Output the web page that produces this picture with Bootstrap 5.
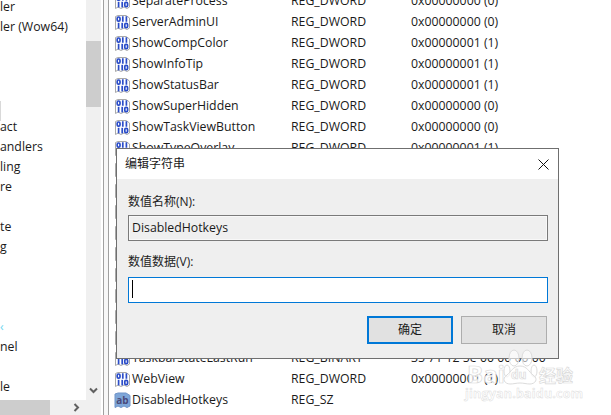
<!DOCTYPE html>
<html lang="zh-CN">
<head>
<meta charset="utf-8">
<title>编辑字符串</title>
<link href="https://cdn.jsdelivr.net/npm/bootstrap@5.3.0/dist/css/bootstrap.min.css" rel="stylesheet">
<style>
html,body{height:415px;overflow:hidden}
body{font-family:"Open Sans","Noto Sans CJK SC",sans-serif;font-size:12.3px;color:#1a1a1a;background:#fff;position:relative;line-height:1}
.tree-pane{width:101px;height:415px;flex:none;background:#f0f0f0;position:relative}
.tree-view{width:86px;height:400px;background:#fff;overflow:hidden}
.tree-rows{margin-top:1px}
.tree-row{height:20px;white-space:nowrap}
.tree-row.sel{border-left:1px solid #d9d9d9;background:#fff}
.tree-mark{color:#6fd6ef}
.vbar{width:15px;height:400px;position:relative}
.vthumb{position:absolute;left:0;top:41px;width:15px;height:66px;background:#cdcdcd}
.vdown{position:absolute;left:3px;top:387px}
.hbar{height:15px;width:101px;background:#f0f0f0;position:relative}
.hthumb{width:50px;height:15px;background:#cdcdcd}
.hright{position:absolute;left:73px;top:3px}
.split{width:6px;flex:none;height:415px;border-left:1px solid #a0a0a0;border-right:1px solid #a0a0a0;background:#f7f7f7;margin-left:2px}
.list-pane{flex:1;height:415px;overflow:hidden;padding-left:5px}
.reg-rows{margin-top:-9px}
.reg-row{height:21px;white-space:nowrap}
.reg-ico{width:17px;height:17px;flex:none;margin-right:1px}
.reg-name{width:159px;flex:none}
.reg-type{width:120px;flex:none}
.dlg{position:absolute;left:116px;top:148px;width:443px;height:211px;border:1px solid #6f6f6f;background:#efefef}
.dlg-head{height:30px;background:#fff;padding-left:8px;font-size:12px}
.dlg-x{margin-right:9px}
.dlg-body{padding:16px 10px 0 11px}
.dlg-lab{height:13px;margin-bottom:7px;font-size:12px;line-height:13px;color:#222}
.dlg-val.form-control{height:26px;border:1px solid #7a7a7a;border-radius:0;background:#efefef;padding:0 3px 2px;font-size:12.3px;color:#1a1a1a;box-shadow:inset 0 0 0 1px #f8f8f8;margin-bottom:14px;font-family:inherit}
.dlg-edit{height:26px;border:1px solid #0078d7;background:#fff;padding:2px 3px;margin-top:9px}
.dlg-caret{width:1px;height:18px;background:#000}
.dlg-foot{margin-top:13px;gap:8px;padding-right:1px}
.dlg-btn.btn{width:86px;height:28px;border-radius:0;background:#e1e1e1;border:1px solid #adadad;font-size:12px;color:#1a1a1a;padding:0;line-height:1;font-family:inherit}
.dlg-btn.dlg-def.btn{border:2px solid #0078d7}
.wm{position:absolute;left:0;top:0;width:611px;height:415px;pointer-events:none}
.wm text{font-family:"Open Sans","Noto Sans CJK SC",sans-serif;font-weight:700;fill:#fff;fill-opacity:.85;stroke:#dadada;stroke-width:.7}
.wm .wm-url{stroke-width:.45}
</style>
</head>
<body>
<svg width="0" height="0" class="position-absolute">
<defs>
<symbol id="i-bin" viewBox="0 0 17 17">
<path d="M1.5 2.500 L4 1.500 H12 L15.500 4 V14 L13 15.500 L10 14 L7 15.500 L4 14 L1.500 15.500Z" fill="#fff" stroke="#a9a9a9"/>
<g fill="none" stroke="#2a4cc8" stroke-width="1.7">
<rect x="3.200" y="3" width="2.800" height="4.200" rx="1.200"/>
<path d="M8.800 2.200V7.800M12.400 2.200V7.800"/>
<path d="M4.600 8.800V14.400"/>
<path d="M8.200 8.800V14.400"/>
<rect x="10.800" y="9.400" width="2.800" height="4.200" rx="1.200"/>
</g>
</symbol>
</defs>
</svg>
<div class="d-flex">
<div class="tree-pane">
<div class="d-flex">
<div class="tree-view"><div class="tree-rows">
<div class="tree-row">ler</div>
<div class="tree-row">ler (Wow64)</div>
<div class="tree-row"></div><div class="tree-row"></div><div class="tree-row"></div>
<div class="tree-row sel"></div>
<div class="tree-row">act</div>
<div class="tree-row">andlers</div>
<div class="tree-row">ling</div>
<div class="tree-row">re</div>
<div class="tree-row"></div>
<div class="tree-row">te</div>
<div class="tree-row">g</div>
<div class="tree-row"></div><div class="tree-row"></div><div class="tree-row"></div>
<div class="tree-row tree-mark">‹</div>
<div class="tree-row">nel</div>
<div class="tree-row"></div>
<div class="tree-row">le</div>
</div></div>
<div class="vbar"><div class="vthumb"></div>
<svg class="vdown" width="9" height="7" viewBox="0 0 9 7"><path d="M1 1.500 4.500 5 8 1.500" fill="none" stroke="#606060" stroke-width="2"/></svg></div>
</div>
<div class="hbar"><div class="hthumb"></div>
<svg class="hright" width="7" height="9" viewBox="0 0 7 9"><path d="M1.500 1 5 4.500 1.500 8" fill="none" stroke="#606060" stroke-width="2"/></svg></div>
</div>
<div class="split"></div>
<div class="list-pane"><div class="reg-rows" id="rows"></div></div>
</div>

<div class="dlg" role="dialog">
<div class="dlg-head d-flex align-items-center justify-content-between">
<span>编辑字符串</span>
<svg class="dlg-x" width="11" height="11" viewBox="0 0 11 11"><path d="M.5.5l10 10M10.500.5l-10 10" stroke="#111" stroke-width="1" fill="none"/></svg>
</div>
<div class="dlg-body">
<div class="dlg-lab">数值名称(N):</div>
<input class="form-control dlg-val" readonly value="DisabledHotkeys">
<div class="dlg-lab">数值数据(V):</div>
<div class="dlg-edit"><div class="dlg-caret"></div></div>
<div class="dlg-foot d-flex justify-content-end">
<button class="btn dlg-btn dlg-def" type="button">确定</button>
<button class="btn dlg-btn" type="button">取消</button>
</div>
</div>
</div>

<svg class="wm" viewBox="0 0 611 415">
<g fill="#fff" fill-opacity=".6" stroke="#dcdcdc" stroke-width="1">
<ellipse cx="514" cy="358" rx="5" ry="8"/><ellipse cx="527" cy="358" rx="5" ry="8"/>
<ellipse cx="507" cy="371" rx="3" ry="6"/><ellipse cx="534" cy="371" rx="3" ry="6"/>
<path d="M520 366c7 0 9 6 13 9 6 4 2 9-3 9-4 0-6-1-10-1s-6 1-10 1c-5 0-9-5-3-9 4-3 6-9 13-9Z"/>
</g>
<text x="467" y="383" font-size="24">Bai</text>
<text x="511" y="379" font-size="12">du</text>
<text x="539" y="382" font-size="17">经验</text>
<text class="wm-url" x="465" y="398" font-size="12.500" letter-spacing=".2">jingyan.baidu.com</text>
</svg>
<script>
var D=[["SeparateProcess","REG_DWORD","0x00000000 (0)"],["ServerAdminUI","REG_DWORD","0x00000000 (0)"],["ShowCompColor","REG_DWORD","0x00000001 (1)"],["ShowInfoTip","REG_DWORD","0x00000001 (1)"],["ShowStatusBar","REG_DWORD","0x00000001 (1)"],["ShowSuperHidden","REG_DWORD","0x00000000 (0)"],["ShowTaskViewButton","REG_DWORD","0x00000000 (0)"],["ShowTypeOverlay","REG_DWORD","0x00000001 (1)"],
["Start_SearchFiles","REG_DWORD","0x00000002 (2)"],["StartMenuInit","REG_DWORD","0x0000000d (13)"],["StartMigratedBrowserPin","REG_DWORD","0x00000001 (1)"],["StartShownOnUpgrade","REG_DWORD","0x00000001 (1)"],["TaskbarAnimations","REG_DWORD","0x00000001 (1)"],["TaskbarAutoHideInTabletMode","REG_DWORD","0x00000000 (0)"],["TaskbarGlomLevel","REG_DWORD","0x00000000 (0)"],["TaskbarMn","REG_DWORD","0x00000000 (0)"],["TaskbarSizeMove","REG_DWORD","0x00000000 (0)"],
["TaskbarStateLastRun","REG_BINARY","35 71 12 5e 00 00 00 00"],["WebView","REG_DWORD","0x00000001 (1)"],["DisabledHotkeys","REG_SZ",""]];
var h="";
D.forEach(function(r){
 var ic=r[1]=="REG_SZ"
 ?'<svg class="reg-ico" viewBox="0 0 17 17"><path d="M1 2 L4 1 H12 L16 3.500 V14 L13 15.500 L10 14 L7 15.500 L4 14 L1 15.500Z" fill="#7ea6d8" stroke="#6f93c8"/><text x="8.500" y="11.500" text-anchor="middle" font-size="10" font-weight="700" fill="#4a4a7a" font-family="Open Sans">ab</text></svg>'
 :'<svg class="reg-ico"><use href="#i-bin"/></svg>';
 h+='<div class="reg-row d-flex align-items-center">'+ic+'<span class="reg-name">'+r[0]+'</span><span class="reg-type">'+r[1]+'</span><span>'+r[2]+'</span></div>';
});
document.getElementById("rows").innerHTML=h;
</script>
</body>
</html>
